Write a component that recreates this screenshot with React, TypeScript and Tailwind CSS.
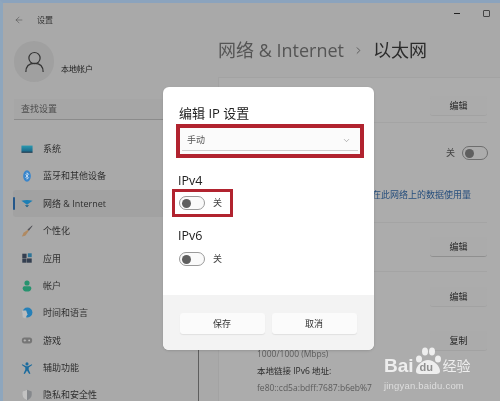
import { ArrowLeft, ChevronDown, ChevronRight } from "lucide-react";

const cjk = "font-['Open_Sans','Noto_Sans_CJK_SC',sans-serif]";

function Paw() {
  return (
    <div className="relative ml-[-1px] h-[28px] w-[29px] shrink-0 self-end">
      <svg width="29" height="28" viewBox="0 0 29 28" className="absolute left-0 top-0">
        <ellipse cx="6" cy="12" rx="3" ry="3.500" fill="#eeeeee" />
        <ellipse cx="12" cy="4.500" rx="3" ry="4" fill="#eeeeee" />
        <ellipse cx="19" cy="4.500" rx="3" ry="4" fill="#eeeeee" />
        <ellipse cx="25" cy="12" rx="3" ry="3.500" fill="#eeeeee" />
        <path d="M3 24c0-5 6-11 12-11s12 6 12 11c0 4-5 3-12 3S3 28 3 24z" fill="#eeeeee" />
      </svg>
      <span className="absolute left-[7px] top-[14px] font-['Liberation_Sans',sans-serif] text-[11px] font-bold leading-[12px] text-[#8f8f8f]">
        du
      </span>
    </div>
  );
}

const navIcons: Record<string, React.ReactNode> = {
  sys: (
    <g>
      <defs>
        <linearGradient id="sysg" x1="0" y1="0" x2="0" y2="1">
          <stop offset="0" stopColor="#2a9ab0" />
          <stop offset="0.7" stopColor="#1d6f8f" />
          <stop offset="1" stopColor="#23384d" />
        </linearGradient>
      </defs>
      <rect x="0.500" y="3" width="13" height="8.500" fill="url(#sysg)" />
    </g>
  ),
  bt: (
    <g>
      <ellipse cx="7" cy="7" rx="4.500" ry="6.800" fill="#3a86cc" />
      <path d="M5.200 5l3.600 4-1.800 1.800V3.200L8.800 5 5.200 9" stroke="#e9f1f8" strokeWidth="0.8" fill="none" />
    </g>
  ),
  net: (
    <g>
      <path d="M0.500 4.500c4-1.500 9-1.500 13 0L7 9z" fill="#1d7fb5" />
      <path d="M4.500 9.500h5L7 12z" fill="#175d88" />
    </g>
  ),
  pen: (
    <g>
      <path d="M13 1L8 5.500 9 6.500z" fill="#4f4f55" stroke="#4f4f55" strokeWidth="0.8" />
      <path d="M8 5.500L9 7 5 12.500 1 13.500 3 9z" fill="#b08a62" />
    </g>
  ),
  app: (
    <g fill="#343f50">
      <rect x="1.500" y="2" width="5" height="5" />
      <rect x="1.500" y="7.500" width="5" height="5" />
      <rect x="7" y="7.500" width="5.500" height="5" />
      <rect x="8" y="1.500" width="4.500" height="4.500" fill="#2e7497" />
    </g>
  ),
  user: (
    <g fill="#27936f">
      <circle cx="7" cy="3.500" r="3" />
      <path d="M2 9.500c0-1.500 1-2.200 2.500-2.200h5c1.500 0 2.500.7 2.500 2.200 0 3-2.500 4-5 4s-5-1-5-4z" />
    </g>
  ),
  time: (
    <g>
      <circle cx="7.500" cy="6.500" r="5.800" fill="#2680b8" />
      <path d="M1 4h5l1.500 4.500L5 13.500 2 12z" fill="#bdbdbd" />
    </g>
  ),
  game: (
    <g>
      <rect x="1" y="4" width="12" height="7" rx="3" fill="#767676" />
      <path d="M3 7.500h3M4.500 6v3" stroke="#c4c4c4" strokeWidth="0.8" />
      <circle cx="9.500" cy="7.500" r="1" fill="#c4c4c4" />
    </g>
  ),
  access: (
    <g fill="#1c6c9e">
      <circle cx="7" cy="2.200" r="1.800" />
      <path d="M1.500 2.500l4.500 2.500h2l4.500-2.500.6 1L9 6.500V9l2 4.500-1.400.4L7 10l-2.600 3.900L3 13.500 5 9V6.500L.9 3.500z" />
    </g>
  ),
  shield: (
    <g>
      <path d="M7 1l5.500 1.800v4c0 3-2.200 5.200-5.500 6.200-3.300-1-5.500-3.200-5.500-6.200v-4z" fill="#85888c" />
      <path d="M7 1v12c-3.300-1-5.500-3.200-5.500-6.200v-4z" fill="#c2c2c2" />
    </g>
  ),
};

const nav = [
  ["sys", "系统"],
  ["bt", "蓝牙和其他设备"],
  ["net", "网络 & Internet"],
  ["pen", "个性化"],
  ["app", "应用"],
  ["user", "帐户"],
  ["time", "时间和语言"],
  ["game", "游戏"],
  ["access", "辅助功能"],
  ["shield", "隐私和安全性"],
];

function GhostButton({ label, dark }: { label: string; dark?: boolean }) {
  return (
    <div
      className={`flex h-[20px] w-[57px] shrink-0 items-center justify-center rounded-[3px] border-b bg-[#ababab] text-[9px] text-[#262626] ${
        dark ? "border-[#8f8f8f]" : "border-[#a2a2a2]"
      }`}
    >
      {label}
    </div>
  );
}

function Toggle({ dim }: { dim?: boolean }) {
  return (
    <div
      className={`flex h-[14px] w-[26px] shrink-0 items-center rounded-full border pl-[2px] ${
        dim ? "border-[#6e6e6e]" : "border-[#9a9a9a] bg-[#fafafa]"
      }`}
    >
      <div className="h-[9px] w-[9px] rounded-full bg-[#5f5f5f]" />
    </div>
  );
}

export default function App() {
  return (
    <div
      className={`relative flex h-[401px] w-[500px] overflow-hidden border-t-[3px] border-l-[3px] border-t-[#8ba3bd] border-l-[#8ea6bd] bg-[#a9a9a9] text-[#2b2b2b] blur-[0.35px] ${cjk}`}
    >
      {/* sidebar */}
      <div className="flex w-[195px] shrink-0 flex-col">
        <div className="mt-[8px] flex h-[17px] shrink-0 items-center pl-[11px]">
          <ArrowLeft size={10} strokeWidth={1.2} color="#444" />
          <span className="ml-[13px] text-[8px] text-[#333]">设置</span>
        </div>
        <div className="mt-[13px] flex h-[41px] shrink-0 items-start pl-[11px]">
          <div className="flex h-[41px] w-[40px] items-center justify-center rounded-full bg-[#a0a0a0]">
            <svg width="19" height="22" viewBox="0 0 22 25" fill="none" stroke="#333" strokeWidth="1.4">
              <circle cx="11" cy="8" r="6.500" />
              <path d="M1 24c0-7 4-10 10-10s10 3 10 10" />
            </svg>
          </div>
          <span className="ml-[7px] mt-[22px] text-[8px] leading-[12px] text-[#222]">本地帐户</span>
        </div>
        <div className="ml-[11px] mt-[17px] flex h-[21px] w-[160px] shrink-0 items-center border-b border-[#8b8b8b] bg-[#a6a6a6] pl-[7px] text-[9px] text-[#4d4d4d]">
          查找设置
        </div>
        <div className="mt-[15px] flex shrink-0 flex-col pl-[10px]">
          {nav.map(([key, label]) => (
            <div
              key={key}
              className={`relative flex h-[27.400px] shrink-0 items-center gap-[10px] pl-[8px] text-[9px] text-[#2f2f2f] ${
                key === "net" ? "rounded-[3px] bg-[#a2a2a2]" : ""
              }`}
            >
              {key === "net" && <div className="absolute left-0 top-[7px] h-[13px] w-[2px] rounded bg-[#24578a]" />}
              <svg width="12" height="12" viewBox="0 0 14 14">
                {navIcons[key]}
              </svg>
              <span>{label}</span>
            </div>
          ))}
        </div>
      </div>

      {/* sidebar scroll line */}
      <div className="absolute left-[195px] top-[347px] h-[51px] w-px bg-[#5e5e5e]" />

      {/* main */}
      <div className="flex min-w-0 flex-1 flex-col">
        <div className="flex h-[16px] shrink-0 justify-end gap-[23px] pr-[10px] pt-[7px]">
          <div className="mt-[3px] h-px w-[6px] bg-[#222]" />
          <div className="h-[7px] w-[7px] rounded-[1px] border border-[#444]" />
        </div>
        <div className="mt-[16px] flex h-[30px] shrink-0 items-center pl-[20px] text-[18px] leading-none">
          <span className="text-[#555]">网络 &amp; Internet</span>
          <ChevronRight size={11} strokeWidth={2} color="#555" className="ml-[9px] mr-[9px]" />
          <span className="text-[#2b2b2b]">以太网</span>
        </div>
        <div className="ml-[20px] mt-[12px] flex flex-1 flex-col border-l border-t border-[#a3a3a3] bg-[#acacac] pr-[13px]">
          <div className="flex h-[45px] shrink-0 items-end justify-end border-b border-[#a4a4a4] pb-[6px]">
            <GhostButton label="编辑" />
          </div>
          <div className="mr-[-1px] flex h-[45px] shrink-0 items-center justify-end gap-[7px] pt-[15px] text-[9px] text-[#444]">
            <span>关</span>
            <Toggle dim />
          </div>
          <div className="flex h-[35px] shrink-0 items-center justify-end pr-[16px] pt-[19px] text-[9px] text-[#274f7d]">
            在此网络上的数据使用量
          </div>
          <div className="mt-[19px] flex h-[50px] shrink-0 items-start justify-end border-b border-t border-[#a4a4a4] pt-[14px]">
            <GhostButton label="编辑" dark />
          </div>
          <div className="flex h-[59px] shrink-0 items-start justify-end pt-[15px]">
            <GhostButton label="编辑" />
          </div>
          <div className="flex shrink-0 justify-end">
            <GhostButton label="复制" />
          </div>
          <div className="mt-[-4px] flex shrink-0 flex-col gap-[3px] pl-[38px] text-[8.500px] leading-[14px]">
            <span className="text-[#5c5c5c]">1000/1000 (Mbps)</span>
            <span className="text-[#2b2b2b]">本地链接 IPv6 地址:</span>
            <span className="whitespace-nowrap text-[#5c5c5c]">fe80::cd5a:bdff:7687:b6eb%7</span>
          </div>
        </div>
      </div>

      {/* dialog */}
      <div className="absolute left-[160px] top-[84px] flex h-[263px] w-[211px] flex-col overflow-hidden rounded-[6px] bg-white shadow-sm">
        <div className="flex flex-1 flex-col">
          <div className="ml-[16px] mt-[17px] text-[13px] leading-[18px] text-[#222]">编辑 IP 设置</div>
          <div className="ml-[13px] mt-[2px] h-[34px] w-[188px] border-[4px] border-[#b1232f] bg-[#fbfbfb]">
            <div className="mx-[2px] flex h-[23px] items-center justify-between border-b border-[#cfcfcf] pl-[5px] pr-[7px] pt-[2px] text-[9px] text-[#555]">
              <span>手动</span>
              <ChevronDown size={9} strokeWidth={1.2} color="#666" />
            </div>
          </div>
          <div className="ml-[15px] mt-[14px] text-[12.500px] leading-[17px] text-[#222]">IPv4</div>
          <div className="ml-[9px] flex h-[28px] w-[61px] items-center gap-[8px] border-[3px] border-[#b1232f] pl-[4px] text-[9px] text-[#444]">
            <Toggle />
            <span>关</span>
          </div>
          <div className="ml-[15px] mt-[10px] text-[12.500px] leading-[18px] text-[#222]">IPv6</div>
          <div className="ml-[16px] mt-[7px] flex h-[14px] items-center gap-[8px] text-[9px] text-[#444]">
            <Toggle />
            <span>关</span>
          </div>
        </div>
        <div className="flex h-[55px] shrink-0 items-start justify-center gap-[7px] bg-[#f3f3f3] pr-[1px] pt-[18px]">
          <div className="flex h-[21px] w-[85px] items-center justify-center rounded-[3px] bg-[#fbfbfb] text-[9px] text-[#333] shadow-[0_1px_1px_#e0e0e0]">
            保存
          </div>
          <div className="flex h-[21px] w-[85px] items-center justify-center rounded-[3px] bg-[#fbfbfb] text-[9px] text-[#333] shadow-[0_1px_1px_#e0e0e0]">
            取消
          </div>
        </div>
      </div>

      {/* watermark */}
      <div className="absolute left-[381px] top-[344px] w-[100px] text-[#eeeeee]">
        <div className="flex h-[28px] items-end font-['Liberation_Sans',sans-serif] text-[19px] font-bold leading-[19px]">
          <span>Bai</span>
          <Paw />
          <span className={`ml-[1px] text-[14px] font-normal leading-[18px] ${cjk}`}>经验</span>
        </div>
        <div className="mt-[5px] whitespace-nowrap font-['Liberation_Sans',sans-serif] text-[9.500px] leading-[12px] tracking-[0.2px] text-[#dedede]">
          jingyan.baidu.com
        </div>
      </div>
    </div>
  );
}
